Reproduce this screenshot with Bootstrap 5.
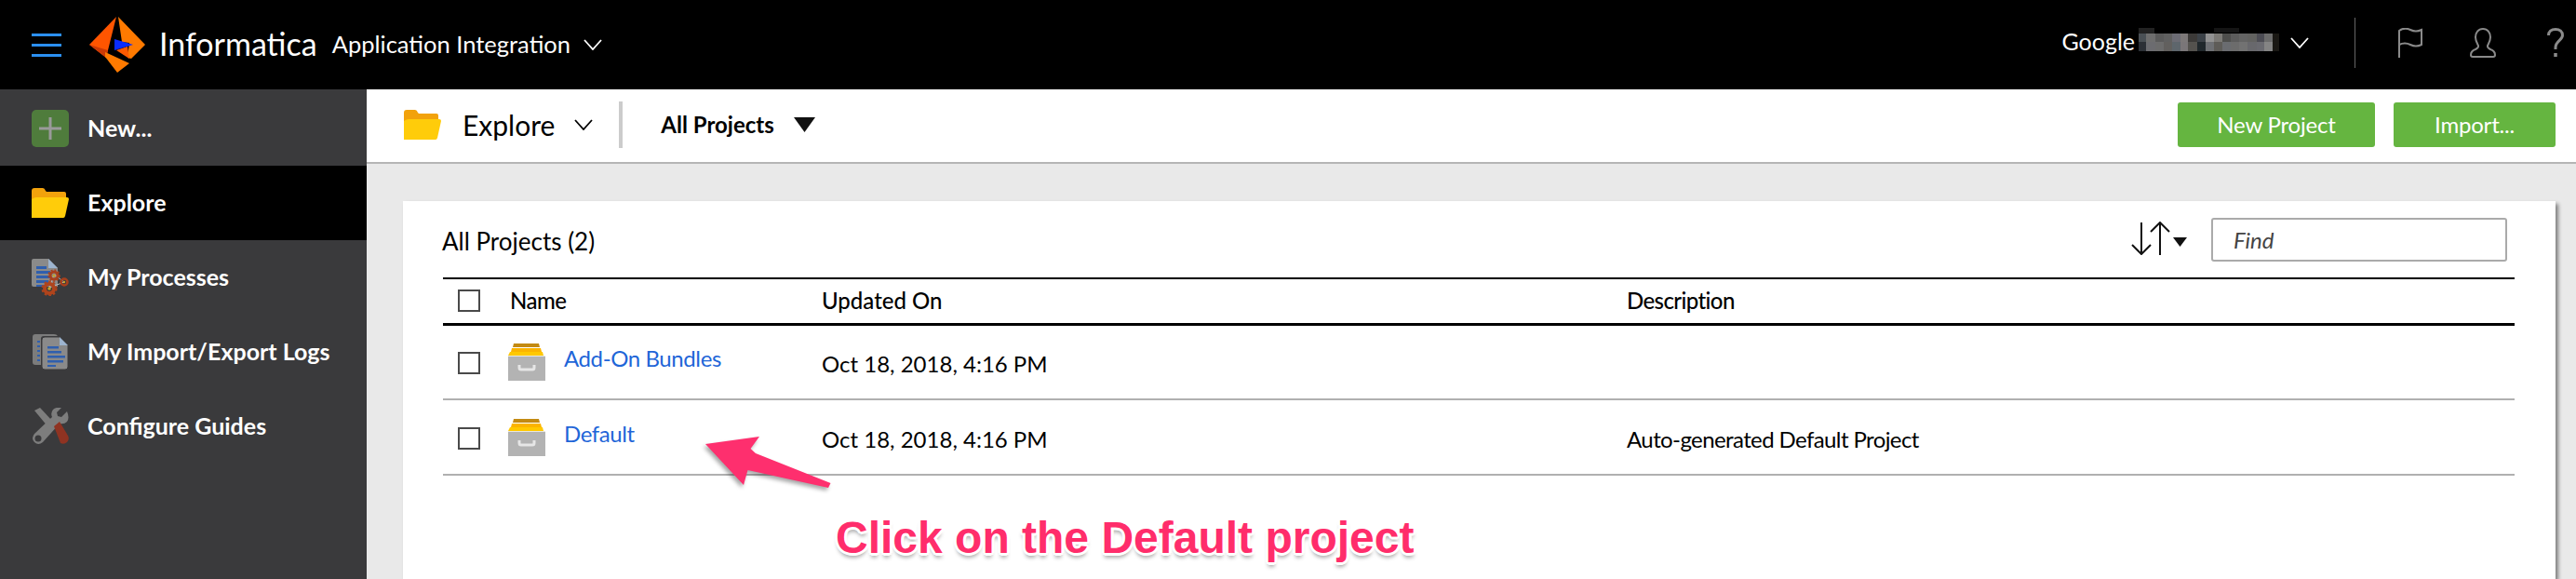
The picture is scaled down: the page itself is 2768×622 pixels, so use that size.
<!DOCTYPE html>
<html lang="en">
<head>
<meta charset="UTF-8" />
<meta name="viewport" content="width=device-width, initial-scale=1.0"/>
<title>Application Integration - Explore</title>
<link href="https://cdn.jsdelivr.net/npm/bootstrap@5.3.3/dist/css/bootstrap.min.css" rel="stylesheet" />
<style>
  body {
    font-family: "Lato", "Liberation Sans", sans-serif;
    color: #000;
    height: 622px;
    overflow: hidden;
    position: relative;
  }
  svg { display: block; flex: none; }

  /* top bar */
  .topbar { height: 96px; background: #000; color: #fff; padding: 0 13px 0 34px; }
  .burger { width: 32px; margin-right: 30px; }
  .burger span { display: block; height: 3px; background: #2b8ff0; margin: 8px 0; }
  .brand { font-size: 34px; font-weight: 400; margin-left: 15px; margin-right: 16px; margin-bottom: 3px; }
  .app-name { font-size: 25.5px; font-weight: 400; margin-right: 14px; margin-bottom: 2px; }
  .org-name { font-size: 25px; margin-right: 3px; margin-bottom: 6px; }
  .org-blur { margin-right: 9px; margin-bottom: 11px; }
  .org-chev { margin-bottom: 4px; }
  .top-divider { width: 1px; height: 54px; background: #666; margin: 0 46px 4px 49px; }
  .top-ico { margin-bottom: 4px; }
  .ico-user { margin-left: 51px; margin-right: 55px; }

  /* sidebar */
  .sidebar { width: 394px; background: #3a3a3c; flex: none; height: 526px; }
  .side-item { height: 80px; padding-left: 34px; color: #fff; font-size: 25px; font-weight: 700; gap: 20px; }
  .side-item.first { height: 82px; padding-top: 2px; }
  .side-item.active { background: #000; }
  .side-ico { width: 40px; }

  /* toolbar */
  .toolbar { height: 80px; background: #fff; border-bottom: 2px solid #b5b5b5; padding: 0 22px 2px 40px; }
  .tool-title { font-size: 30px; margin-left: 23px; margin-right: 21px; }
  .tool-divider { width: 4px; height: 50px; background: #ccc; margin: 0 41px 0 28px; }
  .tool-scope { font-size: 24px; font-weight: 700; margin-right: 21px; }
  .green-btn { background: #65b540; border: 0; color: #fff; border-radius: 3px; height: 48px; font-size: 24px; letter-spacing: -.2px; padding: 0; }
  .green-btn:hover, .green-btn:active { background: #65b540; color: #fff; }
  .btn-new { width: 212px; margin-right: 20px; }
  .btn-import { width: 174px; }

  /* content */
  .content { background: #e9e9e9; padding: 40px 22px 0 39px; height: 446px; }
  .panel { background: #fff; height: 406px; padding: 18px 44px 0 43px; box-shadow: 3px 3px 4px rgba(0,0,0,.45); }
  .panel-head { height: 64px; }
  .panel-title { font-size: 26px; margin-left: -1px; margin-top: 6px; }
  .sort-ico { margin-top: 4px; }
  .find-box { width: 318px; height: 47px; border: 2px solid #aaa; border-radius: 3px; font-size: 24px; font-style: italic; padding: 0 0 0 22px; color: #333; margin-left: 26px; margin-right: 8px; }
  .find-box::placeholder { color: #444; opacity: 1; }
  .find-box:focus { outline: 0; }

  .proj-table { width: 100%; table-layout: fixed; border-collapse: collapse; font-size: 24px; }
  .proj-table thead tr { border-top: 2px solid #000; border-bottom: 3px solid #000; }
  .proj-table th { height: 49px; font-weight: 500; padding: 0; }
  .proj-table td { height: 81px; padding: 0; }
  .proj-table tbody tr { border-bottom: 2px solid #b0b0b0; }
  .col-check { width: 72px; padding-left: 16px !important; }
  .col-name { width: 335px; letter-spacing: -.5px; }
  .col-updated { width: 865px; }
  .col-desc { letter-spacing: -.6px; }
  .proj-table .cell-low { padding-top: 4px; }
  .proj-table .check-low { padding-top: 2px; }
  .box { width: 24px; height: 24px; border: 2px solid #4a4a4a; }
  .proj-link { color: #1f66d8; text-decoration: none; font-size: 24px; letter-spacing: -.4px; margin: 0 0 8px 20px; }
  .proj-name { margin-left: -2px; }

  /* annotation over the page */
  .call-arrow { position: absolute; left: 750px; top: 462px; filter: drop-shadow(-2px 3px 2px rgba(0,0,0,.35)); }
  .call-text {
    position: absolute; left: 898px; top: 547px; margin: 0;
    font-family: "Liberation Sans", Arial, sans-serif; font-weight: 700; font-size: 48px; line-height: 62px;
    color: #ff2d6b; white-space: nowrap;
    text-shadow: -3px 0 0 #fff, 3px 0 0 #fff, 0 -3px 0 #fff, 0 3px 0 #fff, -2px -2px 0 #fff, 2px -2px 0 #fff, -2px 2px 0 #fff, 2px 2px 0 #fff, 0 5px 4px rgba(0,0,0,.35);
  }
</style>
</head>
<body>

<svg width="0" height="0" class="position-absolute">
  <symbol id="open-folder" viewBox="0 0 40 32">
    <path d="M0 3q0-3 3-3h9q2 0 3 3l1 1h19q2 0 2 2v6H0z" fill="#f2a20c"/>
    <path d="M0 32V12q3-2 5-2h33q2 0 2 2l-4 18q-.5 2-2 2z" fill="#ffcc0a"/>
  </symbol>
  <symbol id="archive" viewBox="0 0 40 40">
    <path d="M6 0h27l1 4H5z" fill="#c38a12"/>
    <path d="M4 5h31l1 4H3z" fill="#fbb400"/>
    <path d="M2 9h35l1 4H0z" fill="#ffc800"/>
    <path d="M0 13h40v1H0z" fill="#e8e8e0"/>
    <path d="M0 14h40v26H0z" fill="#b3b3b3"/>
    <path d="M12 23v3q0 2 2 2h12q2 0 2-2v-3" fill="none" stroke="#e6e6e6" stroke-width="3"/>
  </symbol>
  <symbol id="chev" viewBox="0 0 20 12">
    <path d="M1 1l9 10 9-10" fill="none" stroke="currentColor" stroke-width="1.8"/>
  </symbol>
</svg>

<nav class="navbar flex-nowrap p-0">
  <div class="d-flex align-items-center w-100 topbar">
    <div class="burger"><span></span><span></span><span></span></div>
    <svg width="60" height="60" viewBox="0 0 60 60">
      <path d="M29 0L0 30l18 14z" fill="#ff5500"/>
      <path d="M0 30l18 14 2-8z" fill="#cc3a06"/>
      <path d="M31 0l29 30-15 15-4-1 2-16-8-1z" fill="#ff7a00"/>
      <path d="M17 38l26 12-13 10-13-17z" fill="#ff7a00"/>
      <path d="M27 24v12l20-6z" fill="#0a2cff"/>
      <path d="M29 36l12-4 2 13z" fill="#ff5a00"/>
    </svg>
    <span class="brand">Informatica</span>
    <span class="app-name">Application Integration</span>
    <svg width="20" height="12" class="text-white"><use href="#chev"/></svg>

    <div class="ms-auto d-flex align-items-center">
      <span class="org-name">Google</span>
      <svg class="org-blur" width="155" height="25" viewBox="0 0 160 26" shape-rendering="crispEdges">
        <rect x="0" y="0" width="18" height="6" fill="#222"/><rect x="85" y="0" width="28" height="5" fill="#151515"/>
        <g>
          <rect x="0" y="6" width="10" height="10" fill="#4a5055"/><rect x="9" y="6" width="10" height="10" fill="#6e6e6e"/><rect x="19" y="6" width="10" height="10" fill="#5a5a5a"/><rect x="28" y="6" width="10" height="10" fill="#606060"/><rect x="38" y="6" width="10" height="10" fill="#6c6c74"/><rect x="47" y="6" width="10" height="10" fill="#7c7878"/><rect x="56" y="6" width="10" height="10" fill="#3c3a38"/><rect x="66" y="6" width="10" height="10" fill="#3c4248"/><rect x="75" y="6" width="10" height="10" fill="#929292"/><rect x="85" y="6" width="10" height="10" fill="#7c7a76"/><rect x="94" y="6" width="10" height="10" fill="#4e4e4c"/><rect x="103" y="6" width="10" height="10" fill="#5c5c5c"/><rect x="113" y="6" width="10" height="10" fill="#646464"/><rect x="122" y="6" width="10" height="10" fill="#626260"/><rect x="132" y="6" width="10" height="10" fill="#4c4c54"/><rect x="141" y="6" width="10" height="10" fill="#6c6c6c"/><rect x="150" y="6" width="8" height="10" fill="#1a1814"/>
        </g>
        <g>
          <rect x="0" y="16" width="10" height="10" fill="#2c3036"/><rect x="9" y="16" width="10" height="10" fill="#6c6c70"/><rect x="19" y="16" width="10" height="10" fill="#6c6c6c"/><rect x="28" y="16" width="10" height="10" fill="#62605e"/><rect x="38" y="16" width="10" height="10" fill="#5e666c"/><rect x="47" y="16" width="10" height="10" fill="#7a7678"/><rect x="56" y="16" width="10" height="10" fill="#54524e"/><rect x="66" y="16" width="10" height="10" fill="#20282c"/><rect x="75" y="16" width="10" height="10" fill="#6e7074"/><rect x="85" y="16" width="10" height="10" fill="#5e5c58"/><rect x="94" y="16" width="10" height="10" fill="#6a6c70"/><rect x="103" y="16" width="10" height="10" fill="#6c6c6c"/><rect x="113" y="16" width="10" height="10" fill="#727272"/><rect x="122" y="16" width="10" height="10" fill="#68686c"/><rect x="132" y="16" width="10" height="10" fill="#6a6a70"/><rect x="141" y="16" width="10" height="10" fill="#848484"/><rect x="150" y="16" width="8" height="10" fill="#1a1814"/>
        </g>
      </svg>
      <svg width="20" height="12" class="text-white org-chev"><use href="#chev"/></svg>
      <div class="top-divider"></div>
      <svg class="top-ico" width="26" height="32" viewBox="0 0 26 32" fill="none" stroke="#8a8a8a" stroke-width="2">
        <path d="M1 32V3c4-3 8-3 12-1s8 2 12 0v16c-4 2-8 2-12 0s-8-2-12 0"/>
      </svg>
      <svg class="top-ico ico-user" width="28" height="32" viewBox="0 0 28 32" fill="none" stroke="#8a8a8a" stroke-width="2">
        <path d="M14 1c-5 0-8 4-8 9 0 4 2 7 3 9 .5 2-1 3-3 4-3 1-5 3-5 6 0 1.500 1 2 2 2h22c1 0 2-.5 2-2 0-3-2-5-5-6-2-1-3.500-2-3-4 1-2 3-5 3-9 0-5-3-9-8-9z"/>
      </svg>
      <svg class="top-ico" width="18" height="32" viewBox="0 0 18 32" fill="none" stroke="#8a8a8a" stroke-width="3">
        <path d="M1.500 8c0-4 3-6.500 7.500-6.500S16.500 4 16.500 8c0 5-7.500 6-7.500 13v2"/>
        <path d="M9 27v4" stroke-width="3.500"/>
      </svg>
    </div>
  </div>
</nav>

<div class="d-flex">
  <aside class="sidebar">
    <div class="side-item first d-flex align-items-center">
      <svg class="side-ico" width="40" height="40" viewBox="0 0 40 40">
        <rect width="40" height="40" rx="5" fill="#4f7c3c"/>
        <path d="M20 8v24M8 20h24" stroke="#9a9a9a" stroke-width="3"/>
      </svg>
      <span>New...</span>
    </div>
    <div class="side-item active d-flex align-items-center">
      <svg class="side-ico" width="40" height="32"><use href="#open-folder"/></svg>
      <span>Explore</span>
    </div>
    <div class="side-item d-flex align-items-center">
      <svg class="side-ico" width="40" height="40" viewBox="0 0 40 40">
        <path d="M2 0h16l10 10v20H2q-2 0-2-2V2q0-2 2-2z" fill="#8a8a8a"/>
        <path d="M18 0l10 10H18z" fill="#9db4cf"/>
        <path d="M5 8h11v3H5zM5 13h15v3H5zM5 18h16v3H5zM5 23h13v3H5zM5 28h10v2H5z" fill="#2f5fae"/>
        <path d="M24 17l-5 14M24 17l11 8M19 31l16-6" stroke="#bbb" stroke-width="1" fill="none"/>
        <circle cx="24" cy="18" r="4" fill="none" stroke="#a8401c" stroke-width="3"/><circle cx="24" cy="18" r="1.500" fill="#c9a227"/>
        <circle cx="35" cy="25" r="3.500" fill="none" stroke="#a8401c" stroke-width="2.500"/><circle cx="35" cy="25" r="1.200" fill="#c9a227"/>
        <circle cx="19" cy="32" r="5" fill="none" stroke="#b0441c" stroke-width="4"/><circle cx="19" cy="32" r="1.800" fill="#c9a227"/>
        <circle cx="19" cy="32" r="7.500" fill="none" stroke="#b0441c" stroke-width="2" stroke-dasharray="2.500 2.400"/>
        <circle cx="24" cy="18" r="6" fill="none" stroke="#a8401c" stroke-width="1.500" stroke-dasharray="2 2"/>
      </svg>
      <span>My Processes</span>
    </div>
    <div class="side-item d-flex align-items-center">
      <svg class="side-ico" width="40" height="38" viewBox="0 0 40 38">
        <path d="M4 0h20q3 0 4 2H13q-3 0-3 3v28H4q-3 0-3-3V3q0-3 3-3z" fill="#7c7c7c"/>
        <path d="M6 7h3v2H6zM6 12h3v2H6zM6 17h3v2H6zM6 22h3v2H6zM6 27h3v2H6z" fill="#2f5fae"/>
        <path d="M14 3h16l9 9v23q0 3-3 3H14q-3 0-3-3V6q0-3 3-3z" fill="#8a8a8a" stroke="#3a3a3c" stroke-width="1"/>
        <path d="M30 3l9 9h-9z" fill="#9db4cf"/>
        <path d="M17 13h12v2.500H17zM17 18h15v2.500H17zM17 23h19v2.500H17zM17 28h17v2.500H17zM17 33h9v2H17z" fill="#2f5fae"/>
      </svg>
      <span>My Import/Export Logs</span>
    </div>
    <div class="side-item d-flex align-items-center">
      <svg class="side-ico" width="40" height="40" viewBox="0 0 40 40">
        <path d="M3 3l6-3 14 15-5 6z" fill="#7d7d7d"/>
        <path d="M38 4l-6 6-4-1-1-4 5-5q-6-1-9 2-3 4-1 8L3 28q-4 5 0 9 4 4 9 0L30 17q5 1 8-2 3-4 0-11z" fill="#7d7d7d"/>
        <circle cx="7" cy="33" r="3.500" fill="#3a3a3c"/>
        <path d="M24 20l6-5 9 15q2 4-1 7t-7 1z" fill="#8f3322"/>
      </svg>
      <span>Configure Guides</span>
    </div>
  </aside>

  <main class="flex-grow-1">
    <div class="toolbar d-flex align-items-center">
      <svg width="40" height="32"><use href="#open-folder"/></svg>
      <span class="tool-title">Explore</span>
      <svg width="20" height="12"><use href="#chev"/></svg>
      <div class="tool-divider"></div>
      <span class="tool-scope">All Projects</span>
      <svg width="23" height="16" viewBox="0 0 23 16"><path d="M0 0h23L11.500 16z" fill="#111"/></svg>
      <button type="button" class="btn green-btn btn-new ms-auto">New Project</button>
      <button type="button" class="btn green-btn btn-import">Import...</button>
    </div>

    <div class="content">
      <div class="panel">
        <div class="panel-head d-flex align-items-start">
          <span class="panel-title">All Projects (2)</span>
          <svg class="ms-auto sort-ico" width="60" height="36" viewBox="0 0 60 36" fill="none" stroke="#111" stroke-width="2">
            <path d="M11 1v34M1 25l10 10 10-10M31 36V1M21 11L31 1l10 10"/>
            <path d="M45 17h15l-7.500 10z" fill="#111" stroke="none"/>
          </svg>
          <input class="find-box" type="text" placeholder="Find" />
        </div>
        <table class="proj-table">
          <thead>
            <tr>
              <th class="col-check"><div class="box"></div></th>
              <th class="col-name">Name</th>
              <th class="col-updated">Updated On</th>
              <th class="col-desc">Description</th>
            </tr>
          </thead>
          <tbody>
            <tr>
              <td class="col-check check-low"><div class="box"></div></td>
              <td>
                <div class="d-flex align-items-center proj-name">
                  <svg width="40" height="40"><use href="#archive"/></svg>
                  <a class="proj-link" href="#">Add-On Bundles</a>
                </div>
              </td>
              <td class="cell-low">Oct 18, 2018, 4:16 PM</td>
              <td class="cell-low col-desc"></td>
            </tr>
            <tr>
              <td class="col-check check-low"><div class="box"></div></td>
              <td>
                <div class="d-flex align-items-center proj-name">
                  <svg width="40" height="40"><use href="#archive"/></svg>
                  <a class="proj-link" href="#">Default</a>
                </div>
              </td>
              <td class="cell-low">Oct 18, 2018, 4:16 PM</td>
              <td class="cell-low col-desc">Auto-generated Default Project</td>
            </tr>
          </tbody>
        </table>
      </div>
    </div>
  </main>
</div>

<svg class="call-arrow" width="150" height="70" viewBox="750 462 150 70">
  <path d="M758 477l58-8-9.500 13 5.500 5 80.500 32-2.500 5-86.500-19-4.500 16z" fill="#fe2f6e"/>
</svg>
<p class="call-text">Click on the Default project</p>

</body>
</html>
